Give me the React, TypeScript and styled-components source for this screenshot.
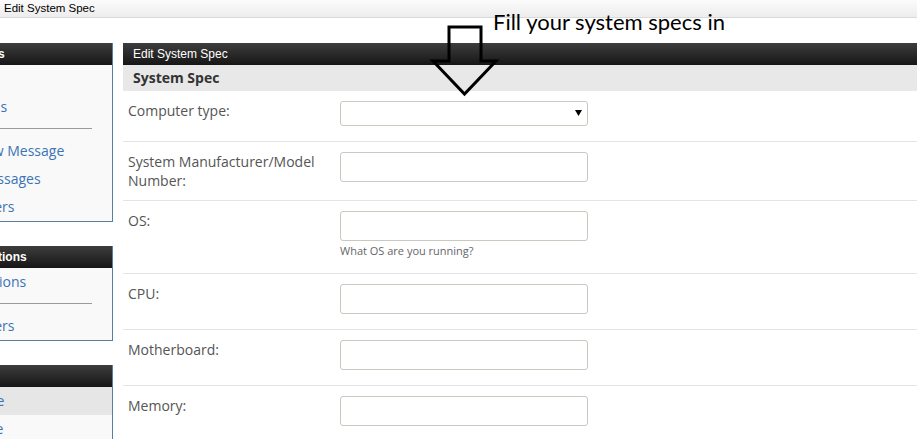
import React from "react";
import styled, { createGlobalStyle } from "styled-components";

const GlobalStyle = createGlobalStyle`
  html, body { margin: 0; padding: 0; background: #ffffff; overflow: hidden; }
  * { box-sizing: border-box; }
`;

const Page = styled.div`
  position: relative;
  width: 917px;
  height: 439px;
  overflow: hidden;
`;

const TopBar = styled.div`
  height: 18px;
  padding-left: 4px;
  border-bottom: 1px solid #d9d9d9;
  background: linear-gradient(#fbfbfb, #ededed);
  font: 11.5px/17px "Liberation Sans", Arial, sans-serif;
  color: #000000;
`;

const Layout = styled.div`
  display: flex;
  gap: 10px;
  margin-top: 25px;
  margin-left: -72px;
`;

const Sidebar = styled.div`
  width: 185px;
  flex: none;
  display: flex;
  flex-direction: column;
  gap: 24px;
`;

const Panel = styled.div`
  border-right: 1px solid #5a7e9e;
  border-bottom: 1px solid #5a7e9e;
`;

const BarHeader = styled.div<{ $bold?: boolean }>`
  height: 22px;
  padding-left: 10px;
  background: linear-gradient(#3d3d3d, #161616);
  color: #ffffff;
  font: ${(p) => (p.$bold ? "bold" : "normal")} 12px/22px "Liberation Sans", Arial, sans-serif;
  white-space: nowrap;
`;

const PanelBody = styled.div`
  background: #f9f9f9;
`;

const NavItem = styled.div<{ $active?: boolean }>`
  height: 28px;
  padding-left: 10px;
  background: ${(p) => (p.$active ? "#e6e6e6" : "transparent")};
  font: 14px/28px "Open Sans", "Noto Sans", sans-serif;
  color: #3b74b6;
  white-space: nowrap;
`;

const NavSep = styled.div`
  height: 16px;
  padding: 7px 20px 0 10px;
  &::after {
    content: "";
    display: block;
    border-top: 1px solid #9a9a9a;
  }
`;

const Main = styled.div`
  flex: 1;
  min-width: 0;
`;

const SubHeader = styled.div`
  height: 26px;
  padding-left: 10px;
  background: #e8e8e8;
  color: #333333;
  font: bold 14px/26px "Open Sans", "Noto Sans", sans-serif;
`;

const Row = styled.div`
  display: grid;
  grid-template-columns: 212px 248px;
  padding: 10px 0 10px 5px;
  border-bottom: 1px solid #e4e4e4;
`;

const Label = styled.div`
  padding-right: 20px;
  font: 14px/19px "Open Sans", "Noto Sans", sans-serif;
  color: #555555;
`;

const Field = styled.div`
  padding-bottom: 5px;
`;

const TextInput = styled.input`
  display: block;
  width: 248px;
  height: 30px;
  margin: 0;
  border: 1px solid #cbc8bf;
  border-radius: 3px;
  background: #ffffff;
  outline: none;
`;

const SelectWrap = styled.div`
  position: relative;
  width: 248px;
  height: 25px;
`;

const NativeSelect = styled.select`
  display: block;
  width: 100%;
  height: 100%;
  margin: 0;
  appearance: none;
  border: 1px solid #cbc8bf;
  border-radius: 3px;
  background: #ffffff;
  outline: none;
`;

const Caret = styled.svg`
  position: absolute;
  right: 6px;
  top: 9px;
  pointer-events: none;
`;

const Help = styled.div`
  margin-top: 2px;
  font: 11px/15px "Open Sans", "Noto Sans", sans-serif;
  color: #666666;
`;

const Annotation = styled.div`
  position: absolute;
  left: 493px;
  top: 8px;
  font: 22px/28px Lato, "Open Sans", sans-serif;
  color: #000000;
  white-space: nowrap;
`;

const ArrowMark = styled.svg`
  position: absolute;
  left: 429px;
  top: 24px;
`;

type Spec = { label: string; kind: "select" | "text"; help?: string };

const specs: Spec[] = [
  { label: "Computer type:", kind: "select" },
  { label: "System Manufacturer/Model Number:", kind: "text" },
  { label: "OS:", kind: "text", help: "What OS are you running?" },
  { label: "CPU:", kind: "text" },
  { label: "Motherboard:", kind: "text" },
  { label: "Memory:", kind: "text" },
];

export default function App() {
  return (
    <Page>
      <GlobalStyle />
      <TopBar>Edit System Spec</TopBar>
      <Layout>
        <Sidebar>
          <Panel>
            <BarHeader $bold>PM Options</BarHeader>
            <PanelBody>
              <NavItem>Inbox</NavItem>
              <NavItem>Sent Items</NavItem>
              <NavSep />
              <NavItem>Send New Message</NavItem>
              <NavItem>Track Messages</NavItem>
              <NavItem>Edit Folders</NavItem>
            </PanelBody>
          </Panel>
          <Panel>
            <BarHeader $bold>Thread Options</BarHeader>
            <PanelBody>
              <NavItem>Subscriptions</NavItem>
              <NavSep />
              <NavItem>Edit Folders</NavItem>
            </PanelBody>
          </Panel>
          <Panel>
            <BarHeader $bold>Settings</BarHeader>
            <PanelBody>
              <NavItem $active>My Device</NavItem>
              <NavItem>My Profile</NavItem>
            </PanelBody>
          </Panel>
        </Sidebar>
        <Main>
          <BarHeader>Edit System Spec</BarHeader>
          <SubHeader>System Spec</SubHeader>
          {specs.map((s) => (
            <Row key={s.label}>
              <Label>{s.label}</Label>
              <Field>
                {s.kind === "select" ? (
                  <SelectWrap>
                    <NativeSelect defaultValue="">
                      <option value=""></option>
                    </NativeSelect>
                    <Caret width="7" height="6" viewBox="0 0 7 6">
                      <path d="M0 0H7L3.5 6Z" fill="#000" />
                    </Caret>
                  </SelectWrap>
                ) : (
                  <TextInput type="text" />
                )}
                {s.help && <Help>{s.help}</Help>}
              </Field>
            </Row>
          ))}
        </Main>
      </Layout>
      <Annotation>Fill your system specs in</Annotation>
      <ArrowMark width="72" height="74" viewBox="0 0 72 74">
        <path
          d="M20 3H52V37H67L35.5 70L4 37H20Z"
          fill="none"
          stroke="#000"
          strokeWidth="3"
          strokeLinejoin="miter"
        />
      </ArrowMark>
    </Page>
  );
}
